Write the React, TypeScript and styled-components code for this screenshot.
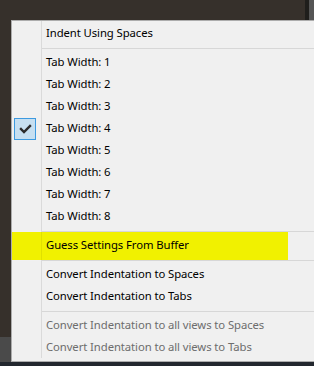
import React from 'react';
import styled, { createGlobalStyle, css } from 'styled-components';

const Global = createGlobalStyle`
  html, body {
    margin: 0;
    padding: 0;
    background: #36302b;
    overflow: hidden;
  }
  #root {
    width: 314px;
    height: 366px;
  }
`;

const Backdrop = styled.div`
  position: relative;
  width: 314px;
  height: 366px;
  overflow: hidden;
  background-color: #36302b;
  background-image:
    linear-gradient(#1f1e1c, #1f1e1c),
    linear-gradient(#555555, #555555),
    linear-gradient(#4a4a4a, #4a4a4a),
    linear-gradient(#22272e, #22272e);
  background-repeat: no-repeat;
  background-size: 4px 20px, 5px 20px, 11px 25px, 100% 5px;
  background-position: 305px 0, 309px 0, 0 337px, 0 361px;
`;

const Menu = styled.div`
  position: absolute;
  left: 11px;
  top: 20px;
  width: 330px;
  box-sizing: border-box;
  border: 1px solid #acacac;
  padding: 1px 0 3px;
  background-color: #f0f0f0;
  background-image: linear-gradient(#dadada, #dadada);
  background-repeat: no-repeat;
  background-size: 1px calc(100% - 3px);
  background-position: 29px 0;
  font-family: "Segoe UI", "Noto Sans", "Open Sans", sans-serif;
  font-size: 11.3px;
  letter-spacing: -0.08px;
  display: flex;
  flex-direction: column;
`;

const Item = styled.div<{ $disabled?: boolean; $highlight?: boolean }>`
  display: flex;
  align-items: center;
  height: 22px;
  box-sizing: content-box;
  color: ${(p) => (p.$disabled ? '#6d6d6d' : '#000000')};
  white-space: nowrap;
  ${(p) =>
    p.$highlight &&
    css`
      width: 276px;
      margin: -2px 0 -4px;
      padding: 2px 0 4px;
      background-color: #f1f100;
      background-image: linear-gradient(rgba(0, 0, 0, 0.07), rgba(0, 0, 0, 0.07));
      background-repeat: no-repeat;
      background-size: 1px 100%;
      background-position: 29px 0;
    `}
`;

const Gutter = styled.div`
  width: 30px;
  height: 22px;
  flex-shrink: 0;
  display: flex;
  align-items: flex-start;
`;

const Label = styled.span`
  padding-left: 4px;
  line-height: 22px;
`;

const CheckBox = styled.div`
  width: 22px;
  height: 22px;
  box-sizing: border-box;
  margin: 1px 0 0 2px;
  border: 1px solid #3d9ae0;
  background: #c6dff1;
  display: flex;
  align-items: center;
  justify-content: center;
`;

const Separator = styled.div`
  height: 1px;
  margin: 4px 0 2px 30px;
  background: #d7d7d7;
`;

const Check = () => (
  <svg width="20" height="20" viewBox="0 0 20 20">
    <path d="M6 10 L9 13 L15 7" fill="none" stroke="#2b2b2b" strokeWidth="2.4" strokeLinecap="square" />
  </svg>
);

type Entry = { label: string; checked?: boolean; disabled?: boolean; highlight?: boolean } | 'sep';

const entries: Entry[] = [
  { label: 'Indent Using Spaces' },
  'sep',
  ...[1, 2, 3, 4, 5, 6, 7, 8].map((n) => ({ label: `Tab Width: ${n}`, checked: n === 4 })),
  'sep',
  { label: 'Guess Settings From Buffer', highlight: true },
  'sep',
  { label: 'Convert Indentation to Spaces' },
  { label: 'Convert Indentation to Tabs' },
  'sep',
  { label: 'Convert Indentation to all views to Spaces', disabled: true },
  { label: 'Convert Indentation to all views to Tabs', disabled: true },
];

export default function App() {
  return (
    <>
      <Global />
      <Backdrop>
        <Menu>
          {entries.map((e, i) =>
            e === 'sep' ? (
              <Separator key={i} />
            ) : (
              <Item key={i} $disabled={e.disabled} $highlight={e.highlight}>
                <Gutter>
                  {e.checked && (
                    <CheckBox>
                      <Check />
                    </CheckBox>
                  )}
                </Gutter>
                <Label>{e.label}</Label>
              </Item>
            )
          )}
        </Menu>
      </Backdrop>
    </>
  );
}
